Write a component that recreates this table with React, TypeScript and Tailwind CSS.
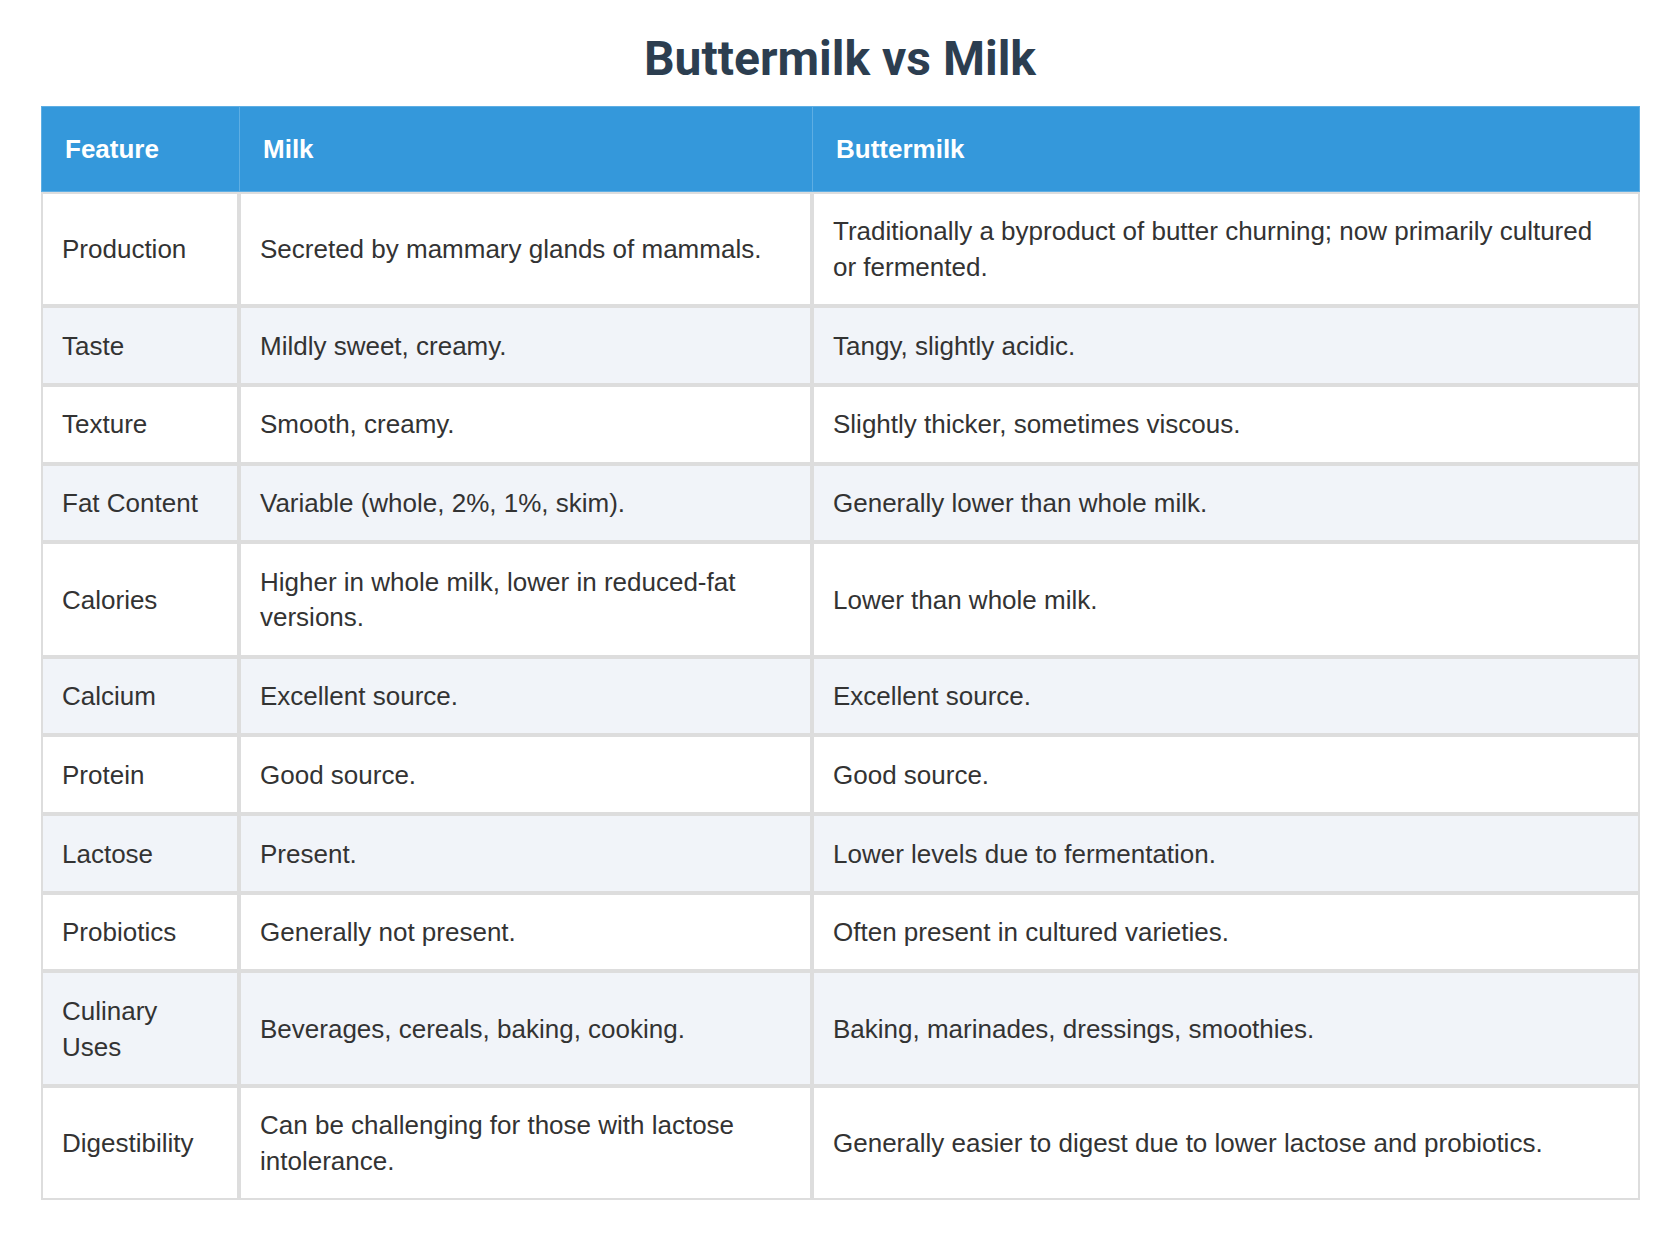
const rows: [string, string, string][] = [
  ["Production", "Secreted by mammary glands of mammals.", "Traditionally a byproduct of butter churning; now primarily cultured or fermented."],
  ["Taste", "Mildly sweet, creamy.", "Tangy, slightly acidic."],
  ["Texture", "Smooth, creamy.", "Slightly thicker, sometimes viscous."],
  ["Fat Content", "Variable (whole, 2%, 1%, skim).", "Generally lower than whole milk."],
  ["Calories", "Higher in whole milk, lower in reduced-fat versions.", "Lower than whole milk."],
  ["Calcium", "Excellent source.", "Excellent source."],
  ["Protein", "Good source.", "Good source."],
  ["Lactose", "Present.", "Lower levels due to fermentation."],
  ["Probiotics", "Generally not present.", "Often present in cultured varieties."],
  ["Culinary Uses", "Beverages, cereals, baking, cooking.", "Baking, marinades, dressings, smoothies."],
  ["Digestibility", "Can be challenging for those with lactose intolerance.", "Generally easier to digest due to lower lactose and probiotics."],
];

const headers = ["Feature", "Milk", "Buttermilk"];

export default function App() {
  return (
    <div className="min-h-screen bg-white px-[40.5px] pt-[32px] pb-10 font-['Liberation_Sans',Arial,sans-serif]">
      {/* Title */}
      <h1 className="text-center font-['Roboto',sans-serif] font-bold text-[48px] leading-[54px] text-[#2c3e50] mb-[20px]">
        Buttermilk vs Milk
      </h1>

      {/* Comparison table */}
      <div className="grid grid-cols-[198px_573px_1fr]">
        {headers.map((h, i) => (
          <div
            key={h}
            className={
              "bg-[#3498db] text-white font-bold text-[26px] leading-[35.7px] pl-[23.5px] pr-[22.5px] pt-[24.5px] pb-[23.5px] border-t border-b border-l border-[#5eaee3]" +
              (i === headers.length - 1 ? " border-r" : "")
            }
          >
            {h}
          </div>
        ))}

        {rows.map((r, ri) =>
          r.map((cell, ci) => (
            <div
              key={ri + "-" + ci}
              className={
                "border-2 border-[#dddddd] text-[#333333] text-[26px] leading-[35.7px] px-[19.5px] pt-[20.5px] pb-[18.5px] flex items-center " +
                (ri % 2 === 1 ? "bg-[#f1f4f9]" : "bg-white")
              }
            >
              <span>{cell}</span>
            </div>
          ))
        )}
      </div>
    </div>
  );
}
